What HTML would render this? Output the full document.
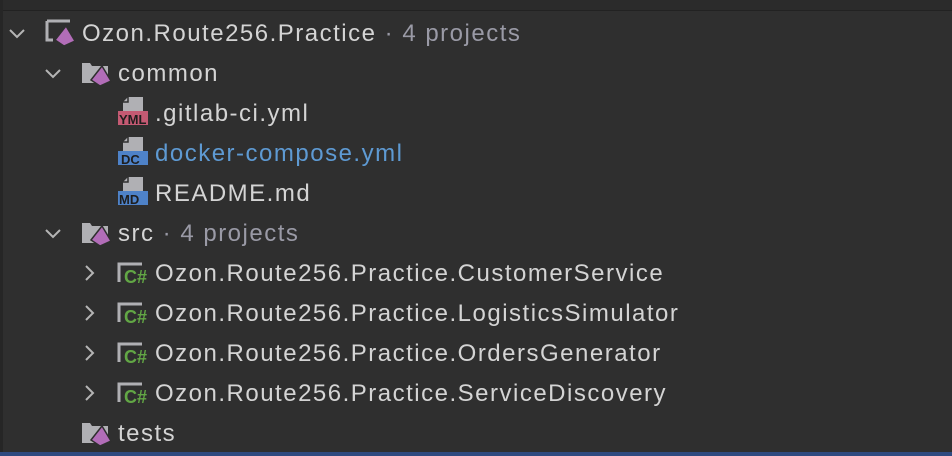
<html><head><style>
body{margin:0;width:952px;height:456px;background:#2f2f2f;position:relative;overflow:hidden;font-family:"Liberation Sans",sans-serif;font-size:24px;letter-spacing:1.5px;color:#d4d4d4}
.top{position:absolute;left:0;top:0;width:952px;height:10px;background:#2b2b2b;border-bottom:1px solid #222}
.lb{position:absolute;left:0;top:0;width:3px;height:456px;background:#262626}
.bot{position:absolute;left:0;top:452px;width:952px;height:4px;background:#2f4a80}
.t{position:absolute;line-height:40px;height:40px;white-space:nowrap}
.g{color:#9a9aa6}
svg{position:absolute;letter-spacing:0}
</style></head><body>
<div class="top"></div><div class="lb"></div>
<svg width="952" height="456" style="left:0;top:0">
<defs>
<g id="ar"><path d="M0 0 L7 7 L14 0" fill="none" stroke="#b5b5b5" stroke-width="2"/></g>
<g id="ar2"><path d="M0 0 L7 7 L0 14" fill="none" stroke="#b5b5b5" stroke-width="2"/></g>
<g id="pyr"><path d="M11 0 L20 15 L9 20 L0 14 Z" fill="#b26db8" stroke="#2f2f2f" stroke-width="1.5"/></g>
<g id="fold"><path d="M0 4 L8 4 L10 7 L26 7 L26 24 L0 24 Z" fill="#b0b0b4"/></g>
<g id="file"><path d="M5 0 L20 0 L20 14 L0 14 L0 5 Z" fill="#b0b0b4"/><path d="M5 0 L5 5 L0 5" fill="none" stroke="#2f2f2f" stroke-width="1.5"/></g>
</defs>
<use href="#ar" x="10" y="30"/>
<path d="M47 21 L70 21 M47 21 L47 40 L53 40" fill="none" stroke="#b0b0b4" stroke-width="3"/>
<use href="#pyr" x="55" y="26"/>
<use href="#ar" x="46" y="70"/>
<use href="#fold" x="82" y="59"/><use href="#pyr" x="91" y="66"/>
<use href="#file" x="123" y="97"/><rect x="118" y="111" width="30" height="14" fill="#c45a73"/>
<text x="119" y="124" font-size="13" font-weight="bold" fill="#1e1e1e" font-family="Liberation Sans">YML</text>
<use href="#file" x="123" y="137"/><rect x="118" y="151" width="30" height="14" fill="#4e82c8"/>
<text x="121" y="164" font-size="13" font-weight="bold" fill="#1e1e1e" font-family="Liberation Sans">DC</text>
<use href="#file" x="123" y="177"/><rect x="118" y="191" width="30" height="14" fill="#4e82c8"/>
<text x="119" y="204" font-size="13" font-weight="bold" fill="#1e1e1e" font-family="Liberation Sans">MD</text>
<use href="#ar" x="46" y="230"/>
<use href="#fold" x="82" y="219"/><use href="#pyr" x="91" y="226"/>
<g id="cs"><path d="M119 282 L119 264 L142 264" fill="none" stroke="#b0b0b4" stroke-width="3"/>
<text x="124" y="283" font-size="18" font-weight="bold" fill="#62a745" font-family="Liberation Sans">C#</text></g>
<use href="#ar2" x="86" y="266"/>
<use href="#cs" y="40"/><use href="#ar2" x="86" y="306"/>
<use href="#cs" y="80"/><use href="#ar2" x="86" y="346"/>
<use href="#cs" y="120"/><use href="#ar2" x="86" y="386"/>
<use href="#fold" x="82" y="419"/><use href="#pyr" x="91" y="426"/>
</svg>
<div class="t" style="left:82px;top:14px">Ozon.Route256.Practice<span class="g"> · 4 projects</span></div>
<div class="t" style="left:118px;top:54px">common</div>
<div class="t" style="left:155px;top:94px">.gitlab-ci.yml</div>
<div class="t" style="left:155px;top:134px;color:#5e9ad3">docker-compose.yml</div>
<div class="t" style="left:155px;top:174px">README.md</div>
<div class="t" style="left:118px;top:214px">src<span class="g"> · 4 projects</span></div>
<div class="t" style="left:155px;top:254px">Ozon.Route256.Practice.CustomerService</div>
<div class="t" style="left:155px;top:294px">Ozon.Route256.Practice.LogisticsSimulator</div>
<div class="t" style="left:155px;top:334px">Ozon.Route256.Practice.OrdersGenerator</div>
<div class="t" style="left:155px;top:374px">Ozon.Route256.Practice.ServiceDiscovery</div>
<div class="t" style="left:118px;top:414px">tests</div>
<div class="bot"></div>
</body></html>
